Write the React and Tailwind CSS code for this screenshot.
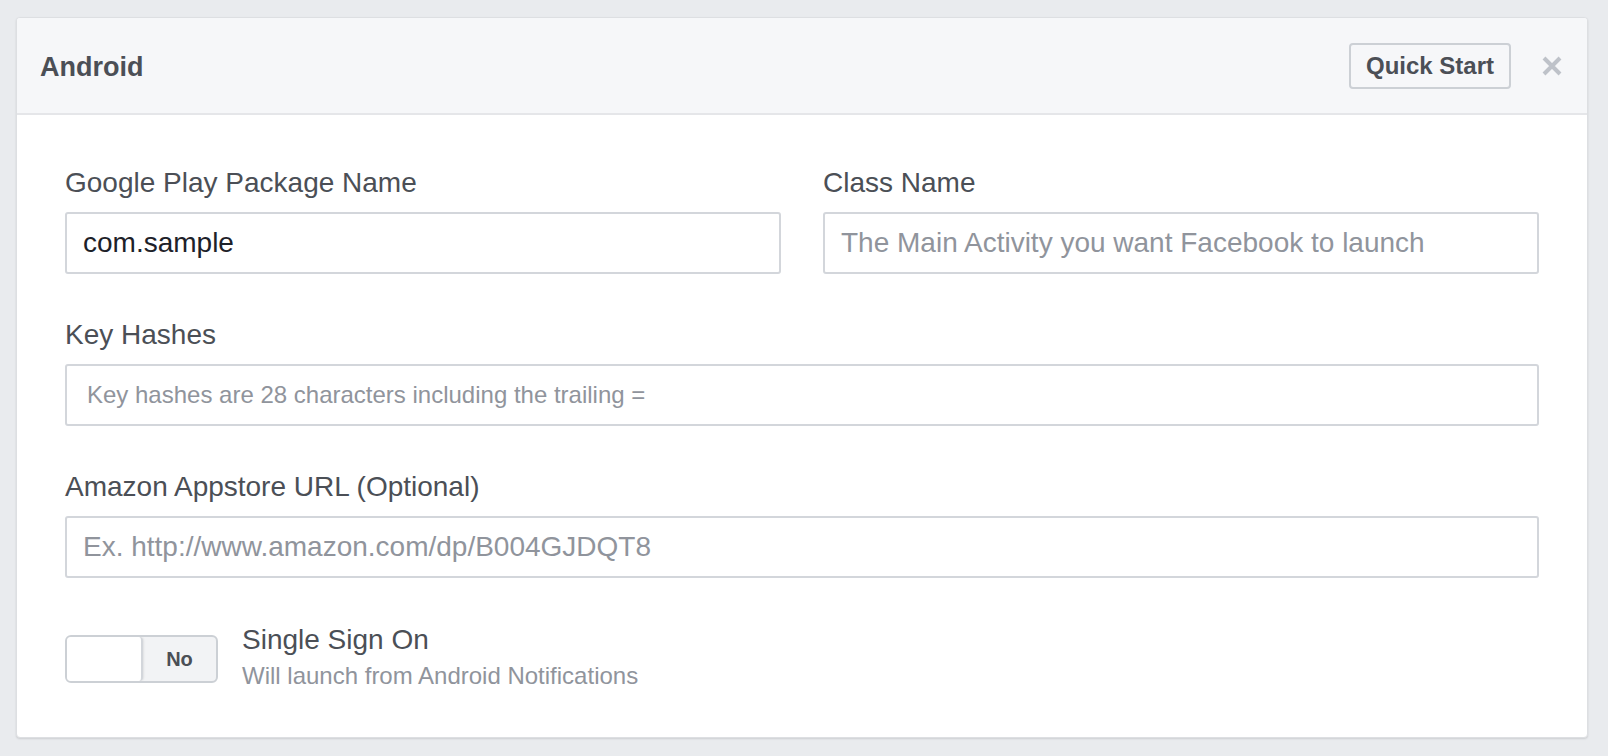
const font = { fontFamily: '"Liberation Sans", Arial, sans-serif' };

const Label = ({ children }) => (
  <div className="text-[28px] leading-[32px] text-[#4b4f56]">{children}</div>
);

const Field = ({ value, placeholder, small }) => (
  <div
    className={`mt-[13px] h-[62px] flex items-center border-2 border-[#d3d6db] rounded-[3px] bg-white ${
      small ? 'pl-[20px]' : 'pl-[16px]'
    }`}
  >
    {value ? (
      <span className="text-[28px] text-[#1d2129]">{value}</span>
    ) : (
      <span className={`${small ? 'text-[24px]' : 'text-[28px]'} text-[#90949c]`}>
        {placeholder}
      </span>
    )}
  </div>
);

export default function App() {
  return (
    <div className="min-h-screen bg-[#e9ebee] pt-[17px] pl-[16px] pr-[20px] pb-[18px]" style={font}>
      <div className="bg-white border border-[#dddfe2] rounded-[4px] shadow-[0_1px_2px_rgba(0,0,0,0.12)] overflow-hidden">
        {/* Header */}
        <div className="h-[97px] bg-[#f6f7f9] border-b-2 border-[#e5e6e9] flex items-center pl-[23px] pr-[25px]">
          <h1 className="text-[27px] font-bold text-[#4b4f56] flex-1 pt-[3px]">Android</h1>
          <button className="w-[162px] h-[46px] border-2 border-[#ccd0d5] rounded-[4px] bg-[#f6f7f9] text-[24px] font-bold text-[#4b4f56]">
            Quick Start
          </button>
          <svg className="ml-[31px]" width="20" height="20" viewBox="0 0 20 20">
            <path d="M2 2 L18 18 M18 2 L2 18" stroke="#bec2c9" strokeWidth="4" strokeLinecap="butt" />
          </svg>
        </div>

        {/* Body */}
        <div className="px-[48px] pt-[52px] pb-[46px]">
          <div className="grid grid-cols-2 gap-x-[42px]">
            <div>
              <Label>Google Play Package Name</Label>
              <Field value="com.sample" />
            </div>
            <div>
              <Label>Class Name</Label>
              <Field placeholder="The Main Activity you want Facebook to launch" />
            </div>
          </div>

          <div className="mt-[45px]">
            <Label>Key Hashes</Label>
            <Field placeholder="Key hashes are 28 characters including the trailing =" small />
          </div>

          <div className="mt-[45px]">
            <Label>Amazon Appstore URL (Optional)</Label>
            <Field placeholder="Ex. http://www.amazon.com/dp/B004GJDQT8" />
          </div>

          <div className="mt-[45px] flex items-start gap-[24px]">
            <div className="mt-[12px] w-[153px] h-[48px] flex border-2 border-[#ccd0d5] rounded-[6px] bg-[#f2f3f5] overflow-hidden">
              <div className="w-[76px] h-full bg-white border-r-2 border-[#d3d6db] rounded-r-[4px] shadow-[1px_0_2px_rgba(0,0,0,0.08)]" />
              <div className="flex-1 flex items-center justify-center text-[20px] font-bold text-[#4b4f56]">
                No
              </div>
            </div>
            <div>
              <div className="text-[28px] leading-[34px] text-[#4b4f56]">Single Sign On</div>
              <div className="text-[24px] leading-[30px] text-[#90949c] mt-[4px]">
                Will launch from Android Notifications
              </div>
            </div>
          </div>
        </div>
      </div>
    </div>
  );
}
